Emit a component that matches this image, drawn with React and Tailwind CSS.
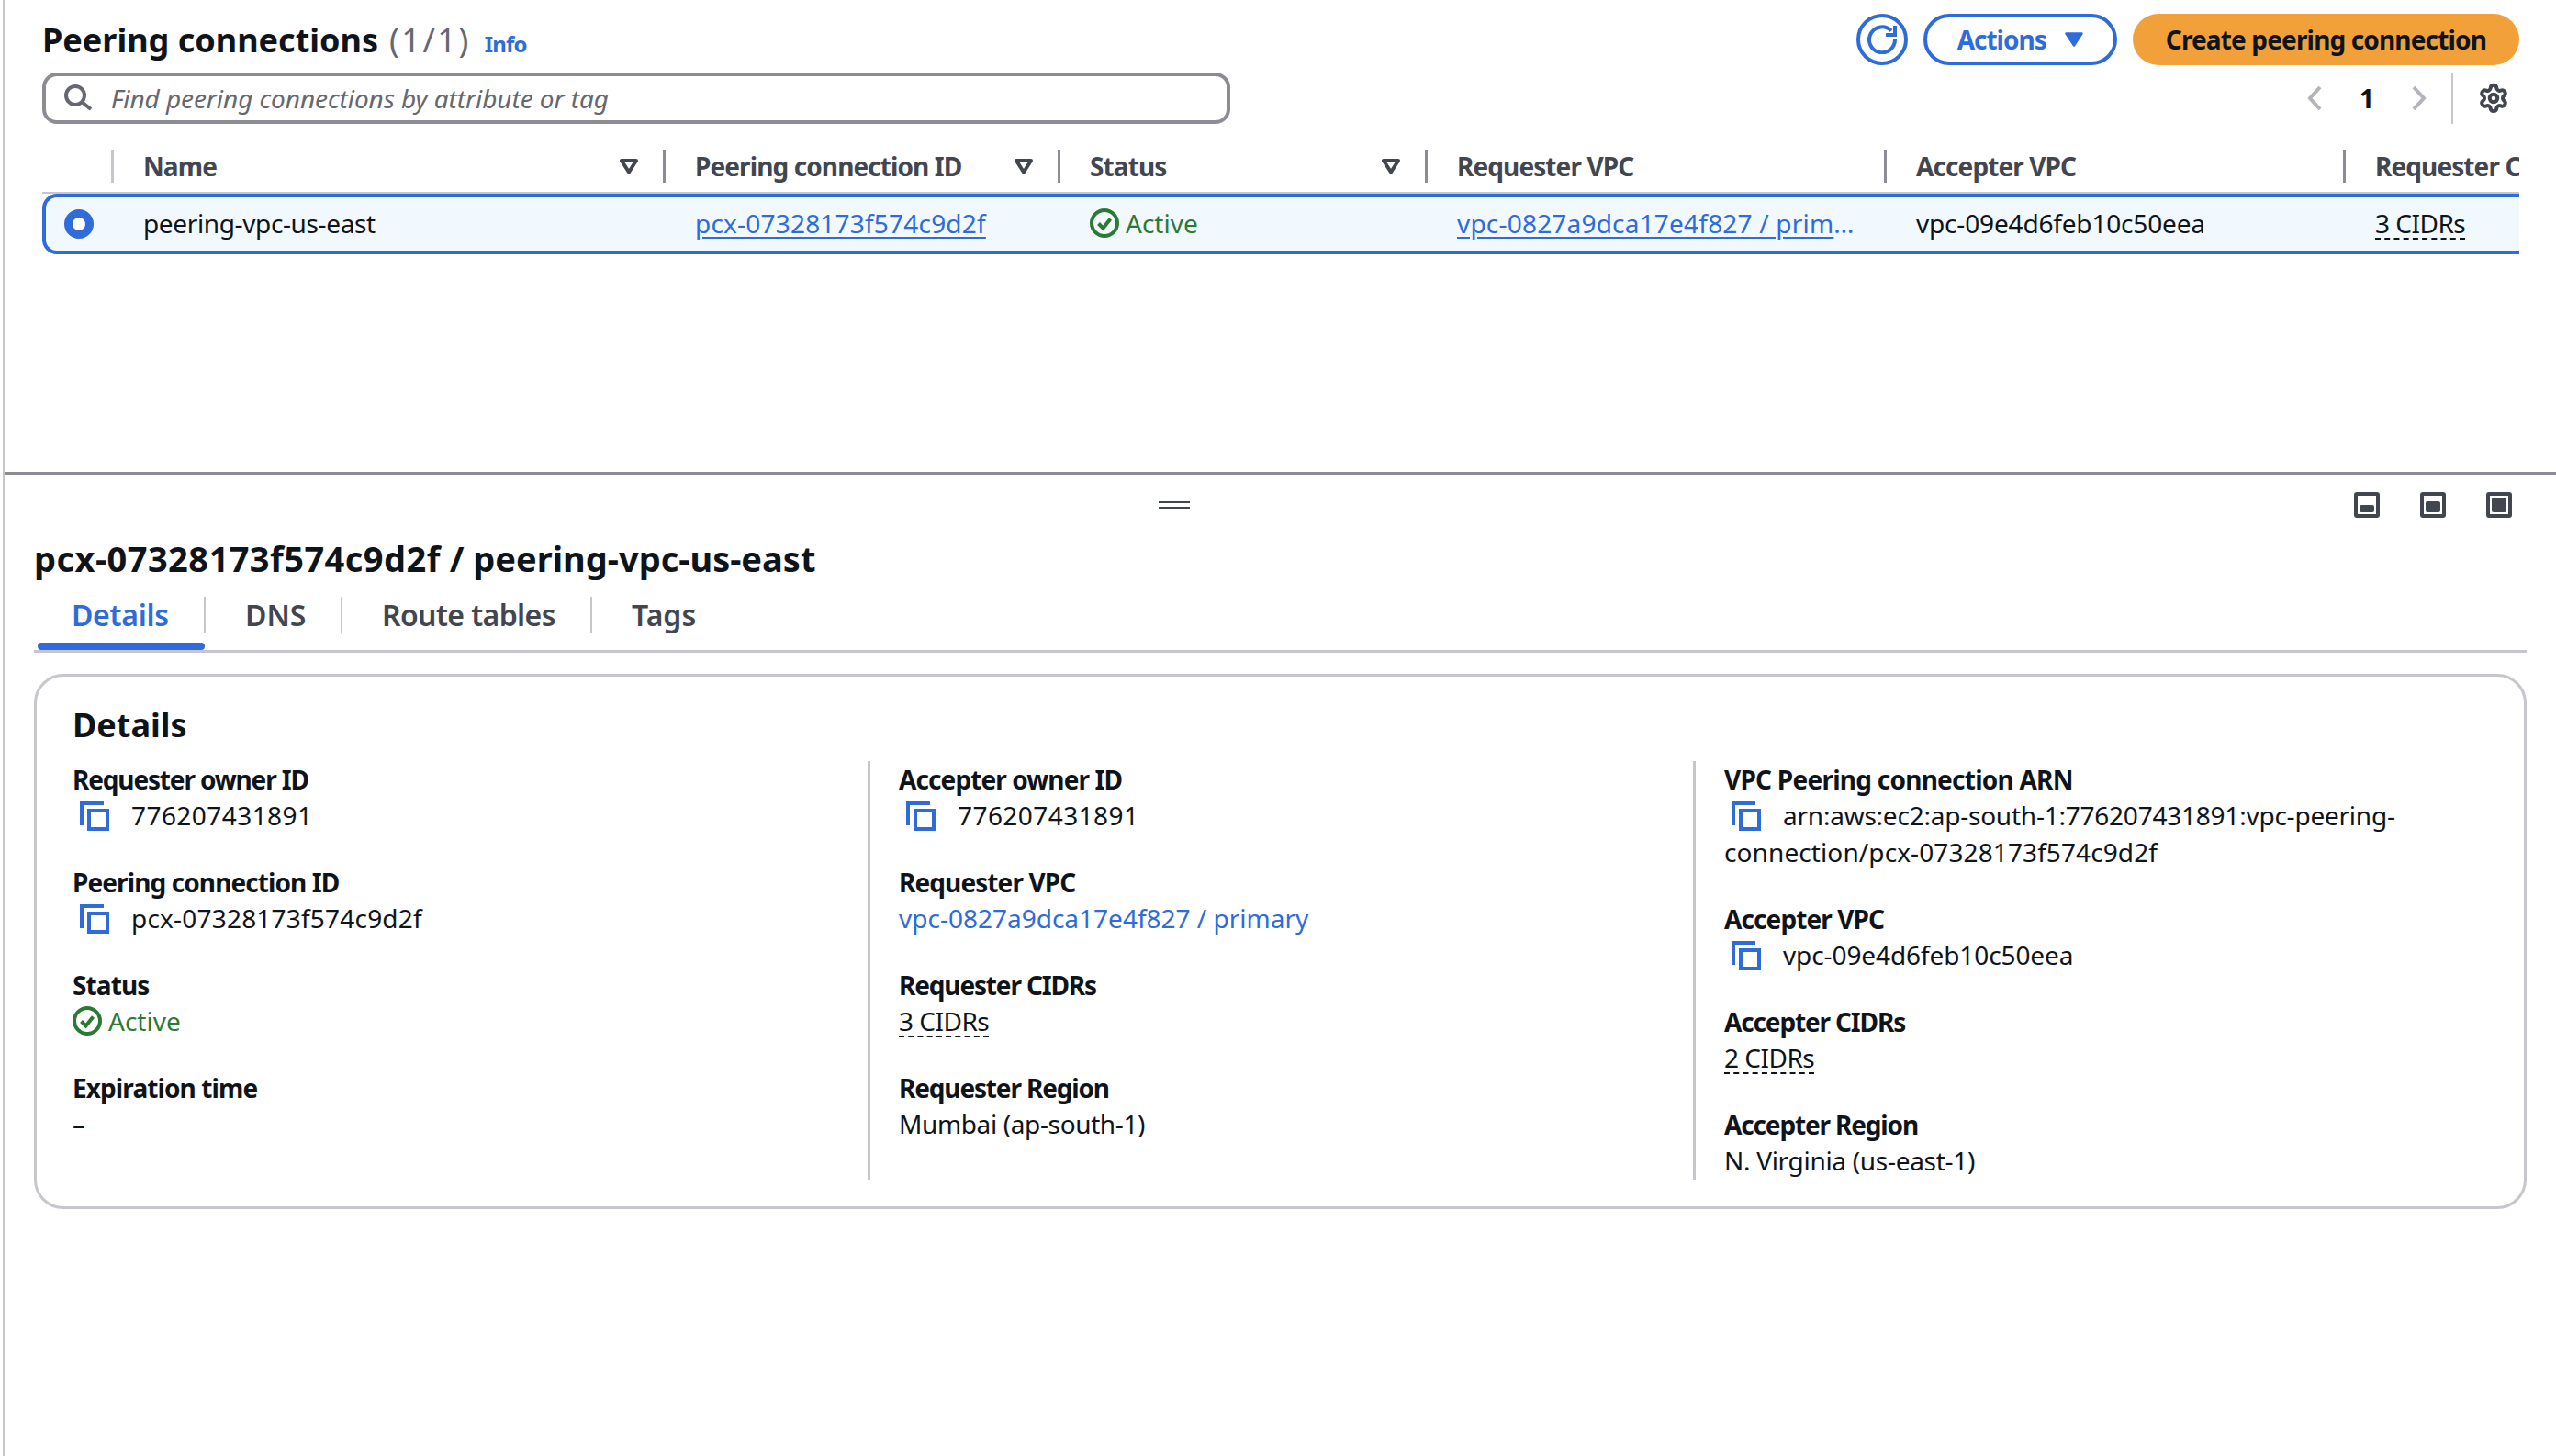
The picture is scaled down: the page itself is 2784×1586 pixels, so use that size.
import React from "react";
import { Settings } from "lucide-react";

const BLUE = "#2f6bd9";

function FilterIcon() {
  return (
    <svg width="20" height="17" viewBox="0 0 20 17" className="shrink-0">
      <path d="M2 2h16l-8 12.5z" fill="none" stroke="#424650" strokeWidth="4" strokeLinejoin="round" />
    </svg>
  );
}

function CopyIcon() {
  return (
    <svg width="32" height="32" viewBox="0 0 32 32" className="shrink-0">
      <path d="M2 26V2h24" fill="none" stroke={BLUE} strokeWidth="4" />
      <rect x="10" y="10" width="20" height="20" fill="none" stroke={BLUE} strokeWidth="4" />
    </svg>
  );
}

function StatusIcon() {
  return (
    <svg width="32" height="32" viewBox="0 0 32 32" className="shrink-0">
      <circle cx="16" cy="16" r="14" fill="none" stroke="#2b7a34" strokeWidth="4" />
      <path d="M9.5 16.5l5 5 8-10" fill="none" stroke="#2b7a34" strokeWidth="4" />
    </svg>
  );
}

function LayoutIcon({ y }) {
  return (
    <svg width="28" height="28" viewBox="0 0 28 28">
      <rect x="2" y="2" width="24" height="24" rx="1" fill="none" stroke="#424650" strokeWidth="4" />
      <rect x="6" y={y} width="16" height={22 - y} rx="2" fill="#424650" />
    </svg>
  );
}

function Active() {
  return (
    <span className="flex items-center gap-[7px] text-[#2b7a34]">
      <StatusIcon />
      Active
    </span>
  );
}

function Dashed({ children }) {
  return (
    <span className="inline-block h-[38px] border-b-2 border-dashed border-[#0f141a] tracking-[-0.5px]">{children}</span>
  );
}

function Copy({ children, track = "" }) {
  return (
    <div className={track}>
      <span className="inline-block ml-[8px] mr-[24px] align-[-6px]">
        <CopyIcon />
      </span>
      {children}
    </div>
  );
}

function Field({ label, children, track = "tracking-[-0.9px]" }) {
  return (
    <div>
      <div className={`font-bold h-[39px] ${track}`}>{label}</div>
      {children}
    </div>
  );
}

function HeaderCell({ width, label, filter, light }) {
  return (
    <div
      className={`flex items-center justify-between h-[36px] shrink-0 border-l-[3px] pl-[32px] pr-[27px] font-bold tracking-[-0.9px] text-[#424650] whitespace-nowrap overflow-hidden ${
        light ? "border-[#c6c6cd]" : "border-[#8c8c94]"
      } ${width}`}
    >
      {label}
      {filter && <FilterIcon />}
    </div>
  );
}

function BodyCell({ width, children, track = "" }) {
  return <div className={`shrink-0 pl-[34px] pr-[26px] pb-[2px] whitespace-nowrap ${width} ${track}`}>{children}</div>;
}

export default function App() {
  return (
    <div
      className="w-[2784px] h-[1586px] overflow-hidden bg-white text-[#0f141a] text-[28px] leading-[40px]"
      style={{ fontFamily: '"Noto Sans", sans-serif' }}
    >
      <div className="ml-[3px] h-full border-l-[2px] border-[#c6c6cd] flex flex-col">
        {/* Top panel */}
        <div className="h-[517px] shrink-0 border-b-[3px] border-[#8c8c94] pl-[41px] pr-[40px] pt-[15px]">
          <div className="flex items-center justify-between h-[56px]">
            <div className="flex items-baseline pt-[2px]">
              <span className="text-[36px] font-bold leading-[50px]">Peering connections</span>
              <span className="text-[36px] leading-[50px] tracking-[2.5px] text-[#656871] ml-[12px]">(1/1)</span>
              <span className="text-[24px] font-bold ml-[15px] tracking-[-0.8px]" style={{ color: BLUE }}>
                Info
              </span>
            </div>
            <div className="flex items-center">
              <div className="w-[56px] h-[56px] rounded-full border-4 border-[#2f6bd9] flex items-center justify-center">
                <svg width="32" height="32" viewBox="0 0 32 32">
                  <path d="M26 6.5A14 14 0 1 0 30 16" fill="none" stroke={BLUE} strokeWidth="4" />
                  <path d="M30 1v10H20" fill="none" stroke={BLUE} strokeWidth="4" />
                </svg>
              </div>
              <div className="ml-[17px] h-[56px] rounded-full border-4 border-[#2f6bd9] px-[33px] flex items-center gap-[20px] font-bold tracking-[-1px] text-[#2f6bd9]">
                Actions
                <svg width="20" height="16" viewBox="0 0 20 16">
                  <path d="M1.5 1.5h17L10 14.5z" fill={BLUE} stroke={BLUE} strokeWidth="2.5" strokeLinejoin="round" />
                </svg>
              </div>
              <div className="ml-[17px] h-[56px] rounded-full bg-[#f2a03a] px-[36px] flex items-center font-bold tracking-[-0.85px]">
                Create peering connection
              </div>
            </div>
          </div>

          <div className="flex items-center justify-between mt-[8px]">
            <div className="w-[1294px] h-[56px] rounded-[16px] border-4 border-[#8c8c94] flex items-center pl-[20px] gap-[19px] italic tracking-[-0.08px] text-[#656871]">
              <svg width="32" height="32" viewBox="0 0 32 32" className="shrink-0">
                <circle cx="12" cy="13" r="10" fill="none" stroke="#656871" strokeWidth="4" />
                <path d="M19 20l10 8" fill="none" stroke="#656871" strokeWidth="4" />
              </svg>
              Find peering connections by attribute or tag
            </div>
            <div className="flex items-center h-[56px]">
              <svg width="16" height="28" viewBox="0 0 16 28">
                <path d="M14 2L3 14l11 12" fill="none" stroke="#b4b4bb" strokeWidth="4" />
              </svg>
              <span className="w-[48px] text-center font-bold ml-[25px] mr-[25px]">1</span>
              <svg width="16" height="28" viewBox="0 0 16 28">
                <path d="M2 2l11 12L2 26" fill="none" stroke="#b4b4bb" strokeWidth="4" />
              </svg>
              <div className="w-[2px] h-[56px] bg-[#c6c6cd] ml-[27px] mr-[27px]" />
              <Settings size={34} strokeWidth={2.8} color="#424650" />
              <div className="w-[11px]" />
            </div>
          </div>

          {/* Table */}
          <div className="mt-[28px] overflow-hidden">
            <div className="flex h-[46px]">
              <div className="w-[75px] shrink-0" />
              <HeaderCell width="w-[601px]" label="Name" filter light />
              <HeaderCell width="w-[430px]" label="Peering connection ID" filter />
              <HeaderCell width="w-[400px]" label="Status" filter />
              <HeaderCell width="w-[500px]" label="Requester VPC" />
              <HeaderCell width="w-[500px]" label="Accepter VPC" />
              <HeaderCell width="w-[192px]" label="Requester CIDRs" />
            </div>
            <div className="border-t-2 border-[#c6c6cd]">
              <div className="flex items-center h-[66px] bg-[#f2f9fe] border-y-4 border-l-4 border-[#2f6bd9] rounded-l-[16px] overflow-hidden">
                <div className="w-[72px] shrink-0 pl-[20px]">
                  <div className="w-[32px] h-[32px] rounded-full border-[9px] border-[#2f6bd9] bg-white" />
                </div>
                <BodyCell width="w-[601px]" track="tracking-[-0.37px]">
                  peering-vpc-us-east
                </BodyCell>
                <BodyCell width="w-[430px]" track="tracking-[0.2px]">
                  <span className="underline underline-offset-[4px] text-[#2f6bd9]">pcx-07328173f574c9d2f</span>
                </BodyCell>
                <BodyCell width="w-[400px]">
                  <Active />
                </BodyCell>
                <BodyCell width="w-[500px]" track="tracking-[0.2px]">
                  <div className="truncate text-[#2f6bd9]">
                    <span className="underline underline-offset-[4px]">vpc-0827a9dca17e4f827 / primary</span>
                  </div>
                </BodyCell>
                <BodyCell width="w-[500px]" track="tracking-[-0.17px]">
                  vpc-09e4d6feb10c50eea
                </BodyCell>
                <BodyCell width="w-[191px]">
                  <Dashed>3 CIDRs</Dashed>
                </BodyCell>
              </div>
            </div>
          </div>
        </div>

        {/* Bottom panel */}
        <div className="flex-1 pl-[32px] pr-[32px]">
          <div className="flex items-center h-[28px] mt-[19px]">
            <div className="ml-[1225px] w-[34px] h-[8px] border-y-2 border-[#424650]" />
            <div className="ml-auto mr-[16px] flex gap-[44px]">
              <LayoutIcon y={14} />
              <LayoutIcon y={10} />
              <LayoutIcon y={6} />
            </div>
          </div>

          <div className="mt-[19px] text-[38px] leading-[50px] font-bold">
            <span className="tracking-[0.45px]">pcx-07328173f574c9d2f</span> / peering-vpc-us-east
          </div>

          <div className="flex border-b-[3px] border-[#c6c6cd] pl-[4px] mt-[3px] text-[#424650] font-semibold text-[32px]">
            <div className="relative pt-[14px] pb-[18px]">
              <div className="h-[40px] leading-[40px] w-[183px] pl-[37px] border-r-2 border-[#c6c6cd] text-[#2f6bd9] tracking-[-0.3px]">
                Details
              </div>
              <div className="absolute left-0 bottom-0 h-[8px] w-[182px] rounded-full bg-[#2f6bd9]" />
            </div>
            <div className="pt-[14px] pb-[18px]">
              <div className="h-[40px] leading-[40px] w-[149px] pl-[43px] border-r-2 border-[#c6c6cd]">DNS</div>
            </div>
            <div className="pt-[14px] pb-[18px]">
              <div className="h-[40px] leading-[40px] w-[272px] pl-[43px] border-r-2 border-[#c6c6cd] tracking-[-0.6px]">
                Route tables
              </div>
            </div>
            <div className="pt-[14px] pb-[18px]">
              <div className="h-[40px] leading-[40px] pl-[43px]">Tags</div>
            </div>
          </div>

          <div className="mt-[23px] h-[583px] rounded-[32px] border-[3px] border-[#c6c6cd] pl-[39px] pt-[28px]">
            <div className="text-[36px] leading-[50px] font-bold">Details</div>
            <div className="mt-[14px] flex h-[456px]">
              <div className="w-[866px] shrink-0 flex flex-col gap-[33px]">
                <Field label="Requester owner ID" track="tracking-[-1.15px]">
                  <Copy track="tracking-[0.44px]">776207431891</Copy>
                </Field>
                <Field label="Peering connection ID">
                  <Copy track="tracking-[0.2px]">pcx-07328173f574c9d2f</Copy>
                </Field>
                <Field label="Status">
                  <Active />
                </Field>
                <Field label="Expiration time">–</Field>
              </div>
              <div className="w-[899px] shrink-0 border-l-[3px] border-[#c6c6cd] pl-[31px] flex flex-col gap-[33px]">
                <Field label="Accepter owner ID">
                  <Copy track="tracking-[0.44px]">776207431891</Copy>
                </Field>
                <Field label="Requester VPC">
                  <span className="text-[#2f6bd9]">vpc-0827a9dca17e4f827 / primary</span>
                </Field>
                <Field label="Requester CIDRs" track="tracking-[-1.15px]">
                  <Dashed>3 CIDRs</Dashed>
                </Field>
                <Field label="Requester Region" track="tracking-[-1.15px]">
                  <span className="tracking-[-0.37px]">Mumbai (ap-south-1)</span>
                </Field>
              </div>
              <div className="flex-1 border-l-[3px] border-[#c6c6cd] pl-[31px] pr-[120px] flex flex-col gap-[33px]">
                <Field label="VPC Peering connection ARN" track="tracking-[-0.75px]">
                  <Copy>
                    <span className="tracking-[-0.23px]">arn:aws:ec2:ap-south-1:776207431891:vpc-peering-</span>
                    <span className="tracking-[0.1px]">connection/pcx-07328173f574c9d2f</span>
                  </Copy>
                </Field>
                <Field label="Accepter VPC">
                  <Copy track="tracking-[-0.1px]">vpc-09e4d6feb10c50eea</Copy>
                </Field>
                <Field label="Accepter CIDRs" track="tracking-[-1.15px]">
                  <Dashed>2 CIDRs</Dashed>
                </Field>
                <Field label="Accepter Region" track="tracking-[-1.15px]">
                  <span className="tracking-[-0.3px]">N. Virginia (us-east-1)</span>
                </Field>
              </div>
            </div>
          </div>
        </div>
      </div>
    </div>
  );
}
